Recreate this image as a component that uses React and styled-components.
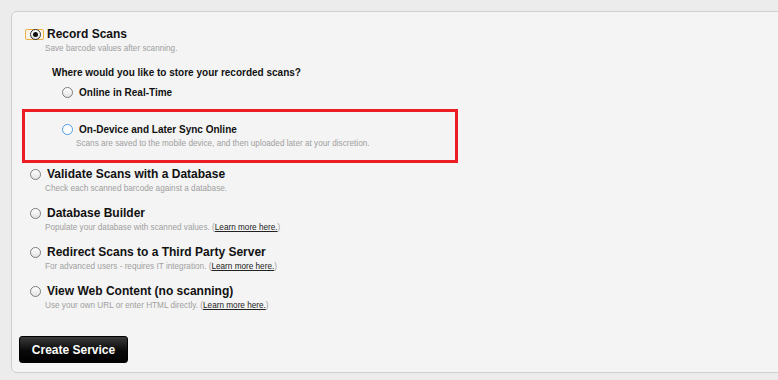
import React from 'react'
import styled, { createGlobalStyle, css } from 'styled-components'

const GlobalStyle = createGlobalStyle`
  html, body {
    margin: 0;
    padding: 0;
    overflow: hidden;
    background: #ececec;
    font-family: "Liberation Sans", Arial, sans-serif;
  }
`

const Page = styled.div`
  width: 778px;
  height: 380px;
  padding-top: 11px;
  box-sizing: border-box;
  overflow: hidden;
`

const Panel = styled.div`
  margin-left: 11px;
  width: 800px;
  height: 362px;
  box-sizing: border-box;
  padding: 14px 0 0 13px;
  background: #f4f4f4;
  border: 1px solid #cfcfcf;
  border-radius: 6px;
`

const OptionRow = styled.div`
  display: flex;
  align-items: center;
  height: 16px;
  margin-top: ${props => props.top || 0}px;
`

const RadioSlot = styled.div`
  width: 22px;
  display: flex;
  align-items: center;
  padding-left: 5px;
  box-sizing: border-box;

  ${props =>
    props.focused &&
    css`
      width: 19px;
      height: 11px;
      margin-right: 3px;
      padding-left: 4px;
      border: 1px solid #f0b040;
      border-radius: 2px;
      background: #f7f3ea;
      box-sizing: border-box;
      justify-content: flex-start;
    `};
`

const Radio = styled.span`
  position: relative;
  display: inline-block;
  width: 11px;
  height: 11px;
  box-sizing: border-box;
  border-radius: 50%;
  border: 1px solid ${props => (props.hover ? '#4f9be6' : '#7d7d7d')};
  background: ${props =>
    props.hover ? '#ffffff' : 'linear-gradient(#ffffff, #e3e3e3)'};
  flex-shrink: 0;

  ${props =>
    props.checked &&
    css`
      border-color: #333;
      &::after {
        content: '';
        position: absolute;
        left: 2px;
        top: 2px;
        width: 5px;
        height: 5px;
        border-radius: 50%;
        background: #111;
      }
    `};
`

const Title = styled.span`
  font-size: 12px;
  font-weight: bold;
  color: #111;
  line-height: 16px;
  white-space: nowrap;
`

const Hint = styled.div`
  font-size: 8.2px;
  color: #a0a0a0;
  line-height: 12px;
  margin-top: ${props => props.top || 1}px;
  margin-left: ${props => props.indent || 20}px;
  white-space: nowrap;

  a {
    color: #222;
    text-decoration: underline;
  }
`

const Question = styled.div`
  margin: 11px 0 0 27px;
  font-size: 10px;
  font-weight: bold;
  color: #111;
  line-height: 14px;
`

const SubRow = styled.div`
  display: flex;
  align-items: center;
  height: 14px;
  margin-left: 37px;
  margin-top: ${props => props.top || 0}px;
`

const SubRadioSlot = styled.div`
  width: 17px;
  display: flex;
  align-items: center;
`

const SubTitle = styled.span`
  font-size: 10px;
  font-weight: bold;
  color: #111;
  white-space: nowrap;
`

const Highlight = styled.div`
  margin: 10px 0 0 -3px;
  width: 436px;
  box-sizing: border-box;
  border: 3px solid #ec1c24;
  padding: 10px 0 10px 0;
`

const CreateButton = styled.button`
  display: block;
  margin: 24px 0 0 -6px;
  width: 109px;
  height: 27px;
  padding: 0;
  border: 1px solid #000;
  border-radius: 3px;
  background: linear-gradient(#3a3a3a, #0a0a0a 55%, #000);
  color: #fff;
  font-family: "Liberation Sans", Arial, sans-serif;
  font-size: 12px;
  font-weight: bold;
  cursor: pointer;
`

const services = [
  {
    title: 'Validate Scans with a Database',
    hint: 'Check each scanned barcode against a database.',
  },
  {
    title: 'Database Builder',
    hint: 'Populate your database with scanned values.',
    link: true,
  },
  {
    title: 'Redirect Scans to a Third Party Server',
    hint: 'For advanced users - requires IT integration.',
    link: true,
  },
  {
    title: 'View Web Content (no scanning)',
    hint: 'Use your own URL or enter HTML directly.',
    link: true,
  },
]

export default function App() {
  return (
    <Page>
      <GlobalStyle />
      <Panel>
        <OptionRow>
          <RadioSlot focused>
            <Radio checked />
          </RadioSlot>
          <Title>Record Scans</Title>
        </OptionRow>
        <Hint>Save barcode values after scanning.</Hint>

        <Question>Where would you like to store your recorded scans?</Question>
        <SubRow top={5}>
          <SubRadioSlot>
            <Radio />
          </SubRadioSlot>
          <SubTitle>Online in Real-Time</SubTitle>
        </SubRow>

        <Highlight>
          <SubRow>
            <SubRadioSlot>
              <Radio hover />
            </SubRadioSlot>
            <SubTitle>On-Device and Later Sync Online</SubTitle>
          </SubRow>
          <Hint indent={51} top={2}>
            Scans are saved to the mobile device, and then uploaded later at
            your discretion.
          </Hint>
        </Highlight>

        {services.map((s, i) => (
          <div key={s.title}>
            <OptionRow top={i === 0 ? 3 : 10}>
              <RadioSlot>
                <Radio />
              </RadioSlot>
              <Title>{s.title}</Title>
            </OptionRow>
            <Hint>
              {s.hint}
              {s.link && (
                <>
                  {' '}(<a href="#">Learn more here.</a>)
                </>
              )}
            </Hint>
          </div>
        ))}

        <CreateButton>Create Service</CreateButton>
      </Panel>
    </Page>
  )
}
